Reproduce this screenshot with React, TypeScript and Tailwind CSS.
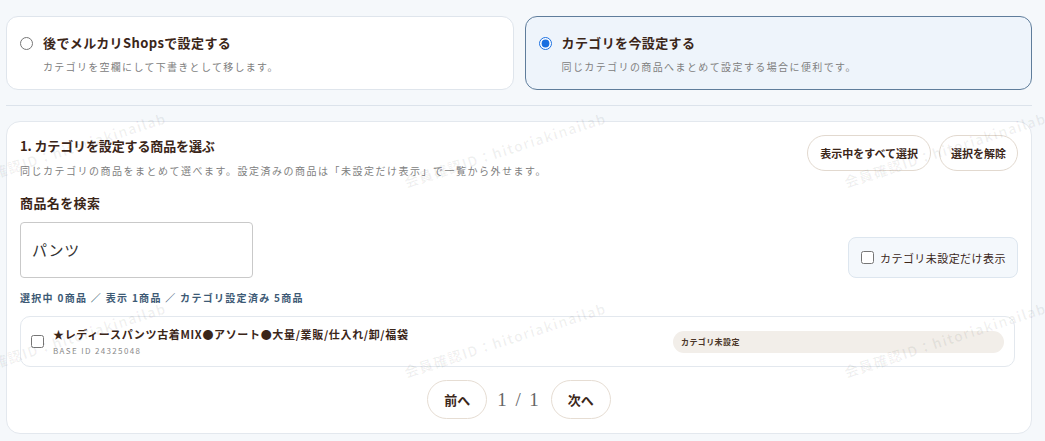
import React from "react";

function Watermarks() {
  const cls =
    "pointer-events-none absolute origin-bottom-left -rotate-[18deg] whitespace-nowrap text-[14px] leading-4 font-bold tracking-[0.08em] text-black/[0.06]";
  const t = "会員確認ID：hitoriakinailab";
  return (
    <div className="pointer-events-none absolute inset-0">
      <span className={`${cls} left-[-33px] top-[-16px]`}>{t}</span>
      <span className={`${cls} left-[407px] top-[-16px]`}>{t}</span>
      <span className={`${cls} left-[847px] top-[-16px]`}>{t}</span>
      <span className={`${cls} left-[-33px] top-[174px]`}>{t}</span>
      <span className={`${cls} left-[407px] top-[174px]`}>{t}</span>
      <span className={`${cls} left-[847px] top-[174px]`}>{t}</span>
      <span className={`${cls} left-[-33px] top-[364px]`}>{t}</span>
      <span className={`${cls} left-[407px] top-[364px]`}>{t}</span>
      <span className={`${cls} left-[847px] top-[364px]`}>{t}</span>
    </div>
  );
}

export default function App() {
  return (
    <div className="relative h-[441px] w-[1045px] overflow-hidden bg-[#f5f8fb] pl-[6px] pr-[13px] pt-4 font-['Noto_Sans_CJK_JP','Noto_Sans',sans-serif] text-[#3b2619]">
      {/* top options */}
      <div className="grid grid-cols-2 gap-[11px]">
        <label className="block h-[74px] rounded-[12px] border border-[#dfe5ec] bg-white px-[13px] pt-[17px]">
          <div className="flex h-[18px] items-center">
            <input type="radio" name="mode" className="m-0 h-[13px] w-[13px]" />
            <span className="ml-[10px] text-[13px] font-bold leading-[18px] tracking-[0.03em]">
              後でメルカリShopsで設定する
            </span>
          </div>
          <p className="ml-[23px] mt-[8px] whitespace-nowrap text-[10px] leading-[14px] tracking-[0.13em] text-[#808080]">
            カテゴリを空欄にして下書きとして移します。
          </p>
        </label>
        <label className="block h-[74px] rounded-[12px] border border-[#5f7d9b] bg-[#eef4fb] px-[13px] pt-[17px]">
          <div className="flex h-[18px] items-center">
            <input type="radio" name="mode" defaultChecked className="m-0 h-[13px] w-[13px] accent-[#1a6fe0]" />
            <span className="ml-[10px] text-[13px] font-bold leading-[18px] tracking-[0.03em]">
              カテゴリを今設定する
            </span>
          </div>
          <p className="ml-[23px] mt-[8px] whitespace-nowrap text-[10px] leading-[14px] tracking-[0.14em] text-[#808080]">
            同じカテゴリの商品へまとめて設定する場合に便利です。
          </p>
        </label>
      </div>

      <div className="mt-[15px] h-px bg-[#dce3eb]" />

      {/* main card */}
      <div className="mt-[15px] rounded-[14px] border border-[#e3e8ee] bg-white px-[13px] pb-[14px] pt-[13px]">
        <div className="flex items-start justify-between">
          <div className="pt-[2px]">
            <h2 className="text-[13px] font-bold leading-[18px] tracking-[-0.01em]">
              1. カテゴリを設定する商品を選ぶ
            </h2>
            <p className="mt-[9px] whitespace-nowrap text-[10px] leading-[14px] tracking-[0.15em] text-[#808080]">
              同じカテゴリの商品をまとめて選べます。設定済みの商品は「未設定だけ表示」で一覧から外せます。
            </p>
          </div>
          <div className="flex gap-[8px]">
            <button className="h-[36px] whitespace-nowrap rounded-full border border-[#e2d9cf] bg-white px-[12px] text-[11px] font-bold text-[#3b2619]">
              表示中をすべて選択
            </button>
            <button className="h-[36px] whitespace-nowrap rounded-full border border-[#e2d9cf] bg-white px-[11px] text-[11px] font-bold text-[#3b2619]">
              選択を解除
            </button>
          </div>
        </div>

        <div className="mt-[16px] text-[13px] font-bold leading-[18px] tracking-[0.03em]">商品名を検索</div>

        <div className="mt-[10px] flex items-end justify-between">
          <div className="flex h-[56px] w-[233px] items-center rounded-[4px] border border-[#c9c9c9] px-[11px] text-[15px] tracking-[0.05em] text-[#333]">
            パンツ
          </div>
          <label className="flex h-[41px] w-[170px] items-center gap-[6px] rounded-[8px] border border-[#dde6ef] bg-[#f4f8fc] pl-[12px] pr-[6px]">
            <input type="checkbox" className="m-0 h-[13px] w-[13px] shrink-0" />
            <span className="whitespace-nowrap text-[11px] leading-[14px] tracking-[0.04em] text-[#3b2619]">カテゴリ未設定だけ表示</span>
          </label>
        </div>

        <div className="mt-[13px] whitespace-nowrap text-[10px] font-bold leading-[14px] tracking-[0.13em] text-[#3d5a75]">
          選択中 0商品 ／ 表示 1商品 ／ カテゴリ設定済み 5商品
        </div>

        <div className="mr-[3px] mt-[11px] flex h-[51px] items-center rounded-[10px] border border-[#e3e8ee] px-[10px]">
          <input type="checkbox" className="m-0 h-[13px] w-[13px] shrink-0" />
          <div className="ml-[9px] flex-1">
            <div className="whitespace-nowrap text-[11px] font-bold leading-[14px] tracking-[0.06em]">
              ★レディースパンツ古着MIX●アソート●大量/業販/仕入れ/卸/福袋
            </div>
            <div className="mt-[5px] text-[8px] leading-[10px] tracking-[0.17em] text-[#8a8a8a]">BASE ID 24325048</div>
          </div>
          <div className="flex h-[22px] w-[331px] items-center rounded-full bg-[#f2eee9] px-[8px] text-[8px] font-bold tracking-[0.05em] text-[#4a3628]">
            カテゴリ未設定
          </div>
        </div>

        <div className="mt-[13px] flex items-center justify-center gap-[10px]">
          <button className="h-[39px] w-[60px] rounded-full border border-[#e6ddd3] bg-white text-[13px] font-bold text-[#3b2619]">
            前へ
          </button>
          <span className="whitespace-nowrap font-['Liberation_Serif',serif] text-[19px] leading-none tracking-[0.1em] text-[#666]">1 / 1</span>
          <button className="h-[39px] w-[60px] rounded-full border border-[#e6ddd3] bg-white text-[13px] font-bold text-[#3b2619]">
            次へ
          </button>
        </div>
      </div>

      <Watermarks />
    </div>
  );
}
